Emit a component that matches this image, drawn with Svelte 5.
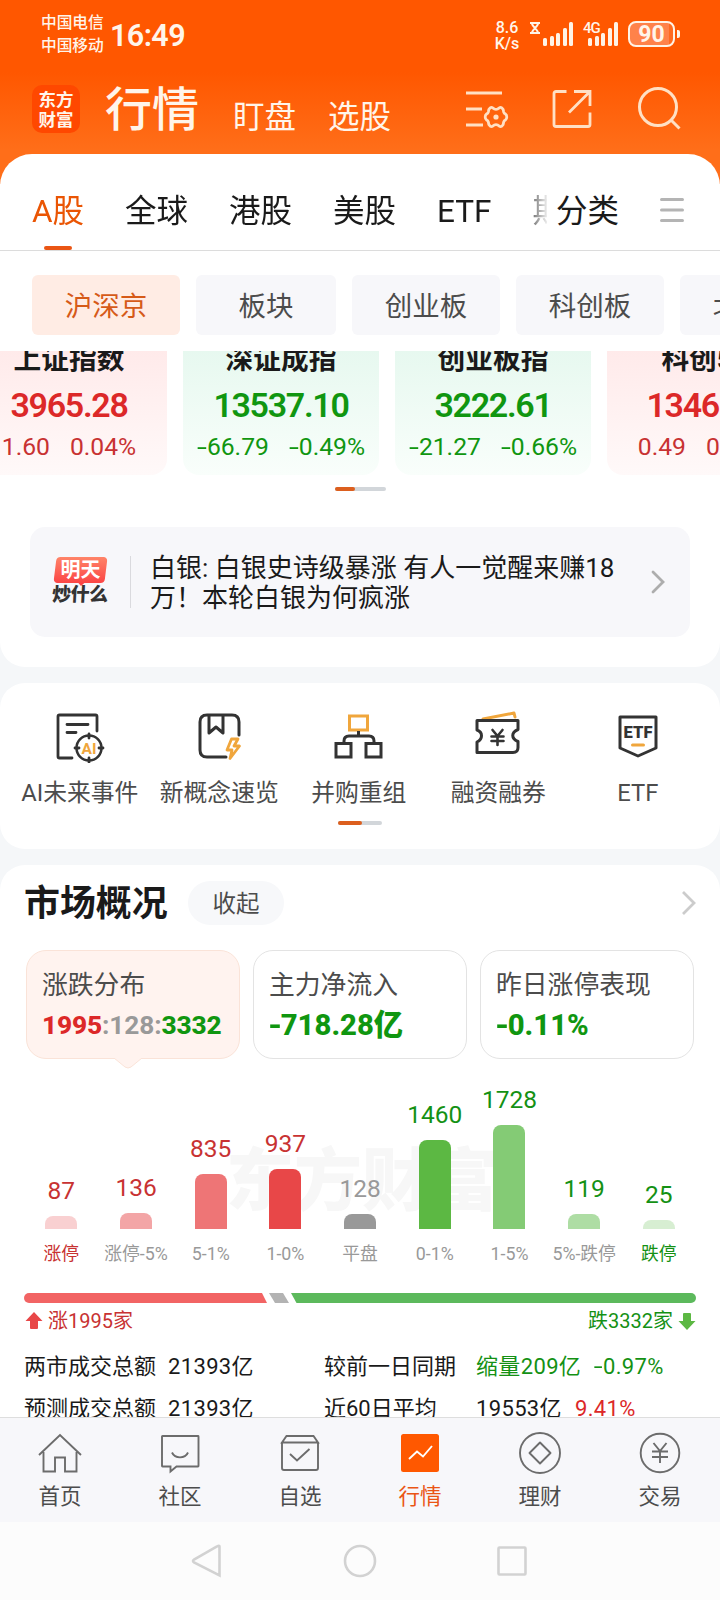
<script>
  const tabs = ['A股', '全球', '港股', '美股', 'ETF', '期货'];
  const chips = [
    { t: '沪深京', w: 148 }, { t: '板块', w: 140 }, { t: '创业板', w: 148 },
    { t: '科创板', w: 148 }, { t: '北交所', w: 148 }
  ];
  const indices = [
    { n: '上证指数', v: '3965.28', c: '1.60', p: '0.04%', up: true },
    { n: '深证成指', v: '13537.10', c: '-66.79', p: '-0.49%', up: false },
    { n: '创业板指', v: '3222.61', c: '-21.27', p: '-0.66%', up: false },
    { n: '科创50', v: '1346.12', c: '0.49', p: '0.04%', up: true }
  ];
  const bars = [
    { v: 87, l: '涨停', h: 13, c: '#f9d0d1', k: 'up hot' },
    { v: 136, l: '涨停-5%', h: 16, c: '#f3a5a6', k: 'up' },
    { v: 835, l: '5-1%', h: 55, c: '#ee7576', k: 'up' },
    { v: 937, l: '1-0%', h: 60, c: '#e84748', k: 'up' },
    { v: 128, l: '平盘', h: 15, c: '#999999', k: 'flat' },
    { v: 1460, l: '0-1%', h: 89, c: '#5cb843', k: 'down' },
    { v: 1728, l: '1-5%', h: 104, c: '#84cb75', k: 'down' },
    { v: 119, l: '5%-跌停', h: 15, c: '#aedda4', k: 'down' },
    { v: 25, l: '跌停', h: 9, c: '#d7eed2', k: 'down hot' }
  ];
  const signal = [8, 10, 13, 18, 24];
</script>

{#snippet signed(s)}{#if s[0] === '-'}<u>-</u>{s.slice(1)}{:else}{s}{/if}{/snippet}

<div class="page">
  <header>
    <div class="status">
      <div class="carriers"><span>中国电信</span><span>中国移动</span></div>
      <div class="time">16:49</div>
      <div class="speed"><span>8.6</span><span>K/s</span></div>
      <svg class="glass" width="10" height="12" viewBox="0 0 10 12"><path d="M0 1h10M0 11h10M2 1.500c0 3 6 6 6 9.500M8 1.500c0 3-6 6-6 9.500" fill="none" stroke="#fff3e6" stroke-width="2" /></svg>
      <div class="bars">{#each signal as h}<i style="height:{h}px"></i>{/each}</div>
      <div class="bars second"><b>4G</b>{#each signal as h}<i style="height:{h}px"></i>{/each}</div>
      <div class="battery"><span>90</span></div><div class="nub"></div>
    </div>
    <div class="nav">
      <div class="logo"><span>东方</span><span>财富</span></div>
      <div class="n1">行情</div><div class="n2">盯盘</div><div class="n2 n3">选股</div>
      <svg class="i1" width="44" height="44" viewBox="0 0 44 44" fill="none" stroke="#ffe0c4" stroke-width="2.800">
        <path d="M1 5h36M1 21h16M1 37h17" />
        <path d="M25.200 19.800q1.300-.9 2.500 0l1.600 1.200q1.700.7 3.400 0l1.600-1.200q1.200-.9 2.500 0l1.300 1.500.6 2.800q.4 1.300 1.700 1.900 1.400.9 1.400 3t-1.400 3q-1.300.6-1.700 1.900l-.6 2.800-1.300 1.500q-1.300.9-2.500 0l-1.600-1.200q-1.700-.7-3.400 0l-1.600 1.200q-1.200.9-2.500 0l-1.300-1.500-.6-2.800q-.4-1.300-1.700-1.900-1.400-.9-1.400-3t1.400-3q1.300-.6 1.700-1.900l.6-2.800z" stroke-linejoin="round" />
        <circle cx="31" cy="29" r="2.600" fill="#ffe0c4" stroke="none" />
      </svg>
      <svg class="i2" width="44" height="44" viewBox="0 0 44 44" fill="none" stroke="#ffe0c4" stroke-width="2.800">
        <path d="M16.500 4.500H6a2 2 0 0 0-2 2v31a2 2 0 0 0 2 2h32a2 2 0 0 0 2-2V25.500M24 4.500h16V19M39.500 5 19 25.500" />
      </svg>
      <svg class="i3" width="46" height="46" viewBox="0 0 46 46" fill="none" stroke="#ffe0c4" stroke-width="3">
        <circle cx="21" cy="21" r="18.500" /><path d="m34.500 34.500 8 8" />
      </svg>
    </div>
  </header>

  <section class="top">
    <div class="tabs">
      <div class="tablist">{#each tabs as t, i}<span class:on={i === 0}>{t}</span>{/each}</div>
      <span class="cat">分类</span>
      <svg width="24" height="26" viewBox="0 0 24 26"><path d="M1.500 2.500h21M1.500 13h21M1.500 23.500h21" stroke="#b4b4b4" stroke-width="3" stroke-linecap="round" /></svg>
    </div>
    <div class="chips">{#each chips as c, i}<div class:on={i === 0} style="width:{c.w}px">{c.t}</div>{/each}</div>
    <div class="indices">
      {#each indices as x}
        <div class="index" class:up={x.up}>
          <h4>{x.n}</h4><strong>{x.v}</strong>
          <p><span>{@render signed(x.c)}</span><span>{@render signed(x.p)}</span></p>
        </div>
      {/each}
    </div>
    <div class="pager"><i></i></div>
    <div class="news">
      <div class="brand">
        <div class="tm"><b>明天</b></div><em>炒什么</em>
      </div>
      <div class="rule"></div>
      <p>白银: 白银史诗级暴涨 有人一觉醒来赚18<br />万！本轮白银为何疯涨</p>
      <svg width="14" height="24" viewBox="0 0 14 24"><path d="m2 2 10 10L2 22" fill="none" stroke="#adadad" stroke-width="2.800" stroke-linecap="round" /></svg>
    </div>
  </section>

  <section class="tools">
    <div class="toolrow">
      <div class="tool">
        <svg width="52" height="52" viewBox="0 0 52 52" fill="none" stroke="#333" stroke-width="2.800" stroke-linecap="round" stroke-linejoin="round">
          <path d="M43 20V5.500Q43 4 41.500 4h-36Q4 4 4 5.500v40Q4 47 5.500 47H18M13 13.500h21M13 21.500h9" />
          <circle cx="35" cy="37" r="12.500" stroke-width="2.500" /><path d="M35 23v4M35 47v4M21 37h4M45 37h4" />
          <text x="35" y="42.500" text-anchor="middle" font-size="15.500" font-weight="700" fill="#f0a63c" stroke="none">AI</text>
        </svg><span>AI未来事件</span>
      </div>
      <div class="tool">
        <svg width="52" height="52" viewBox="0 0 52 52" fill="none" stroke="#333" stroke-width="3" stroke-linecap="round" stroke-linejoin="round">
          <path d="M46 24V11q0-7-7-7H14q-7 0-7 7v28q0 7 7 7h19M16 5v17l7-6 7 6V5" />
          <path d="m38.500 28-4.500 11h5l-2 8.500L46.500 35h-5.500l4-7z" stroke="#f0a63c" stroke-width="2.800" />
        </svg><span>新概念速览</span>
      </div>
      <div class="tool">
        <svg width="52" height="52" viewBox="0 0 52 52" fill="none" stroke="#333" stroke-width="3">
          <path d="M16.500 5h18v14h-18z" stroke="#f0a63c" /><path d="M25.500 20v5M11 32v-2q0-5 5-5h20q5 0 5 5v2M3 32.500h15v13.500H3zM33 32.500h15v13.500H33z" />
        </svg><span>并购重组</span>
      </div>
      <div class="tool">
        <svg width="52" height="52" viewBox="0 0 52 52" fill="none" stroke="#333" stroke-width="3" stroke-linejoin="round" stroke-linecap="round">
          <path d="m11 8 31-6 1 4" stroke="#f0a63c" /><path d="M5 9.500h41v9c-7 3-7 9 0 12v6q0 5-5 5H5V31c6-3 6-10 0-12z" /><path d="m20.500 19 5 6 5-6M25.500 25v9M19.500 25.500h12M19.500 30h12" stroke-width="2.600" />
        </svg><span>融资融券</span>
      </div>
      <div class="tool">
        <svg width="52" height="52" viewBox="0 0 52 52" fill="none" stroke="#333" stroke-width="3" stroke-linejoin="round">
          <path d="M8 6h36v31l-18 8-18-8z" /><path d="M20.500 34h11" stroke="#f0a63c" stroke-linecap="round" />
          <text x="26" y="27" text-anchor="middle" font-size="16.500" font-weight="900" fill="#333" stroke="none" textLength="29">ETF</text>
        </svg><span>ETF</span>
      </div>
    </div>
    <div class="pager small"><i></i></div>
  </section>

  <section class="market">
    <div class="head">
      <h2>市场概况</h2><button>收起</button>
      <svg width="15" height="26" viewBox="0 0 15 26"><path d="m2 2 11 11L2 24" fill="none" stroke="#ccc" stroke-width="2.800" /></svg>
    </div>
    <div class="cards">
      <div class="card sel"><span>涨跌分布</span><strong><b>1995</b><i>:128:</i>3332</strong>
        <svg width="28" height="11" viewBox="0 0 28 11"><path d="M0 0 11 9q3 2 6 0L28 0" fill="#fff3ef" stroke="#fae3d8" /></svg></div>
      <div class="card"><span>主力净流入</span><strong>{@render signed('-718.28亿')}</strong></div>
      <div class="card"><span>昨日涨停表现</span><strong>{@render signed('-0.11%')}</strong></div>
    </div>
    <div class="chart">
      <div class="mark">东方财富</div>
      {#each bars as b}
        <div class="col {b.k}"><span>{b.v}</span><i style="height:{b.h}px;background:{b.c}"></i><small>{b.l}</small></div>
      {/each}
    </div>
    <svg class="split" width="672" height="10" viewBox="0 0 672 10">
      <path d="M5 0h233l5 10H5A5 5 0 0 1 5 0z" fill="#f26464" /><path d="M245 0h14l6 10h-14z" fill="#b3b3b3" /><path d="M267 0h400a5 5 0 0 1 0 10H272.500z" fill="#5cb95c" />
    </svg>
    <div class="counts">
      <div class="upc"><svg width="18" height="18" viewBox="0 0 18 18"><path d="M9 0 17.500 9H13v7q0 1-1 1H6q-1 0-1-1V9H.5z" fill="#e84748" /></svg>涨1995家</div>
      <div class="dnc">跌3332家<svg width="18" height="18" viewBox="0 0 18 18"><path d="M9 18 .5 9H5V2q0-1 1-1h6q1 0 1 1v7h4.500z" fill="#5cb843" /></svg></div>
    </div>
    <div class="stats">
      <span>两市成交总额</span><span>21393亿</span><span>较前一日同期</span><span class="g">缩量209亿<em>{@render signed('-0.97%')}</em></span>
      <span>预测成交总额</span><span>21393亿</span><span>近60日平均</span><span>19553亿<em class="r">9.41%</em></span>
    </div>
  </section>

  <nav>
    <div><svg width="46" height="42" viewBox="0 0 46 42"><path d="M2 23 23 3l21 20M6.500 20v19.500H18V25.500h10v14h11.500V20" /></svg>首页</div>
    <div><svg width="46" height="42" viewBox="0 0 46 42"><path d="M5.500 4h35.500q.5 0 .5.500v29.500q0 .5-.5.500H19.500l-6 5v-5h-8q-.5 0-.5-.5V4.500q0-.5.500-.5zM15 20.500c3 6.500 13 6.500 16 0" /></svg>社区</div>
    <div><svg width="46" height="42" viewBox="0 0 46 42"><path d="M5 10.500 9.500 4h27l4.500 6.500zM5 10v26q0 2 2 2h32q2 0 2-2V10M13 22l7 6.500L32.500 17" /></svg>自选</div>
    <div class="on"><svg width="46" height="42" viewBox="0 0 46 42"><rect x="4" y="2" width="38" height="38" rx="2.500" fill="#ff5800" stroke="none" /><path d="m12 27 8-7.500 6 5L35 14" stroke="#fff" /></svg>行情</div>
    <div><svg width="46" height="42" viewBox="0 0 46 42"><circle cx="23" cy="21" r="20" /><path d="m23 10.500 10.500 10.500L23 31.500 12.500 21z" stroke-linejoin="round" /></svg>理财</div>
    <div><svg width="46" height="42" viewBox="0 0 46 42"><circle cx="23" cy="21" r="19.300" /><path d="m16.500 11 6.500 8 6.500-8M23 19v12M15 19.500h16M15 25h16" /></svg>交易</div>
  </nav>
  <footer>
    <svg width="34" height="34" viewBox="0 0 34 34"><path d="M28.500 2.500v29L3 18.500q-2-1.500 0-3L26 2.500q2.500-1.500 2.500 0z" /></svg>
    <svg width="34" height="34" viewBox="0 0 34 34"><circle cx="17" cy="17" r="15" /></svg>
    <svg width="34" height="34" viewBox="0 0 34 34"><rect x="3.500" y="3.500" width="27" height="27" rx="1" /></svg>
  </footer>
</div>

<style>
  :global(body) { margin: 0; }
  .page { width: 720px; height: 1600px; overflow: hidden; display: flex; flex-direction: column; background: #f5f7f9; font-family: Roboto, "Noto Sans CJK SC", sans-serif; color: #1a1a1a; }
  .page, .page * { box-sizing: border-box; }
  svg { display: block; flex: none; }
  i, em { font-style: normal; }
  u { display: inline-block; text-decoration: none; width: .4em; text-align: center; transform: scaleX(1.45); }
  h2, h4, p { margin: 0; }

  header { height: 184px; flex: none; background: linear-gradient(#ff5700 0 72px, #ff6e19 150px); color: #fff5ea; }
  .status { height: 70px; display: flex; align-items: flex-start; padding-left: 41px; }
  .carriers { display: flex; flex-direction: column; font-size: 15.700px; line-height: 23px; padding-top: 11px; width: 69px; font-weight: 500; white-space: nowrap; }
  .time { font-size: 30.500px; line-height: 36px; padding-top: 18px; width: 384px; font-weight: 600; letter-spacing: -.6px; }
  .speed { display: flex; flex-direction: column; font-size: 16px; line-height: 15.500px; padding-top: 20px; width: 26px; margin-right: 10px; text-align: center; font-weight: 500; }
  .glass { margin-top: 22px; }
  .bars { display: flex; align-items: flex-end; gap: 2.500px; height: 24px; margin: 22px 0 0 3px; position: relative; }
  .bars i { width: 4px; background: #fff3e6; border-radius: 1.500px; }
  .bars.second { margin-left: 15px; }
  .bars b { position: absolute; left: -5px; top: -1px; font-size: 15px; line-height: 15px; font-weight: 500; letter-spacing: -1px; }
  .battery { width: 47px; height: 26px; margin: 21px 2px 0 10px; border: 2px solid #fff3e6; border-radius: 8px; background: linear-gradient(90deg, #ff824a 0 39px, #ff6a20 39px); font-size: 23px; line-height: 23px; font-weight: 700; text-align: center; }
  .nub { width: 3px; height: 8px; margin-top: 30px; background: #fff3e6; border-radius: 0 2px 2px 0; }
  .nav { display: flex; align-items: flex-start; padding-left: 32px; height: 84px; }
  .logo { width: 48px; height: 48px; margin-top: 15px; border-radius: 10px; background: #ff4800; display: flex; flex-direction: column; align-items: center; padding-top: 4px; font-family: "Noto Sans CJK SC", sans-serif; font-size: 17.500px; line-height: 20px; font-weight: 700; }
  .n1 { font-size: 47px; line-height: 60px; padding-top: 10px; margin-left: 25px; width: 128px; white-space: nowrap; font-weight: 500; }
  .n2 { font-size: 31.500px; line-height: 40px; padding-top: 28px; width: 95px; white-space: nowrap; }
  .n3 { width: 137px; }
  .i1 { margin-top: 18px; width: 44px; } .i2 { margin: 17px 0 0 41px; } .i3 { margin: 16px 0 0 43px; }

  section { background: #fff; flex: none; border-radius: 25px; overflow: hidden; }
  .top { margin-top: -30px; height: 513px; border-radius: 32px 32px 25px 25px; }
  .tabs { height: 97px; border-bottom: 1px solid #dcdcdc; display: flex; align-items: flex-start; padding-left: 32px; font-size: 31.500px; line-height: 40px; }
  .tablist { display: flex; gap: 41px; width: 515px; height: 97px; padding-top: 38px; overflow: hidden; white-space: nowrap; -webkit-mask: linear-gradient(90deg, #000 490px, transparent 517px); mask: linear-gradient(90deg, #000 490px, transparent 517px); }
  .tablist span { flex: none; }
  .tablist .on { color: #ea5504; display: flex; flex-direction: column; align-items: center; }
  .tablist .on::after { content: ""; width: 28px; height: 4px; border-radius: 2px; background: #ea5514; margin-top: 14px; }
  .cat { padding: 38px 40.500px 0 9px; }
  .tabs svg { margin-top: 43px; }
  .chips { display: flex; gap: 16px; padding: 24px 0 16px 32px; height: 100px; }
  .chips div { flex: none; height: 60px; border-radius: 6px; background: #f7f7fa; color: #4c4c4c; text-align: center; font-size: 27.500px; line-height: 64px; }
  .chips .on { background: #ffece4; color: #d65a18; }
  .indices { display: flex; gap: 16px; margin-left: -29px; height: 124px; overflow: hidden; align-items: flex-end; }
  .index { flex: none; width: 196px; height: 150px; border-radius: 16px; background: linear-gradient(#e3f7ed, #f9fefb); text-align: center; color: #109610; }
  .index.up { background: linear-gradient(#ffe7e7, #fff9f9); color: #dc2828; }
  .index h4 { font-size: 27.700px; line-height: 36px; padding-top: 17px; color: #1a1a1a; font-weight: 700; }
  .index strong { display: block; font-size: 34px; line-height: 44px; padding-top: 5px; font-weight: 600; letter-spacing: -1.300px; }
  .index p { display: flex; justify-content: center; gap: 20px; font-size: 24.700px; line-height: 30px; padding-top: 5px; }
  .index.up p { color: #c83232; }
  .pager { width: 51px; height: 4px; border-radius: 2px; background: #d2d6da; margin: 12px auto 0; }
  .pager i { display: block; width: 20px; height: 4px; border-radius: 2px; background: #dc5f1e; }
  .news { display: flex; align-items: center; margin: 36px 30px 0; height: 110px; background: #f7f7fa; border-radius: 15px; padding: 0 25px 0 22px; }
  .brand { width: 56px; display: flex; flex-direction: column; align-items: center; }
  .tm { width: 51px; height: 26px; border-radius: 4px; background: linear-gradient(#ff8468, #fb4545); transform: skewX(-7deg); color: #fff; font-size: 20px; line-height: 26px; text-align: center; position: relative; }
  .tm::after { content: ""; position: absolute; left: 25px; top: 26px; border: 3px solid transparent; border-top-color: #fb4545; border-bottom: 0; }
  .tm b { font-weight: 700; display: block; transform: skewX(7deg); }
  .brand em { font-size: 19px; line-height: 24px; font-weight: 900; white-space: nowrap; transform: skewX(-3deg); color: #333; letter-spacing: -.5px; }
  .rule { width: 1px; height: 52px; background: #dadade; margin: 0 20px 0 22px; }
  .news p { flex: 1; font-size: 26px; line-height: 30px; white-space: nowrap; padding-top: 1px; margin-left: -1px; }

  .tools { margin-top: 16px; height: 166px; }
  .toolrow { display: flex; padding: 28px 0 0 10px; width: 710px; height: 135px; }
  .tool { width: 139.500px; display: flex; flex-direction: column; align-items: center; font-size: 23.800px; line-height: 32px; color: #4c4c4c; white-space: nowrap; flex: none; }
  .tool span { margin-top: 14px; }
  .pager.small { width: 44px; margin-top: 3px; } .small i { width: 24px; }

  .market { margin-top: 16px; height: 552px; border-radius: 25px 25px 0 0; }
  .head { display: flex; align-items: center; padding: 0 24px; margin-top: 14px; height: 48px; }
  h2 { font-size: 35.900px; line-height: 48px; font-weight: 700; width: 164px; white-space: nowrap; padding-top: 2px; }
  button { width: 96px; height: 44px; border: 0; padding: 0; border-radius: 22px; background: #f7f8fa; color: #4c4c4c; font: 23.500px/46px Roboto, "Noto Sans CJK SC", sans-serif; margin-right: auto; }
  .cards { display: flex; gap: 13px; padding: 23px 26px 0; height: 132px; }
  .card { width: 214px; height: 109px; border: 1px solid #e3e3e3; border-radius: 20px; padding: 17px 0 0 15px; display: flex; flex-direction: column; white-space: nowrap; position: relative; }
  .card span { font-size: 25.800px; line-height: 34px; color: #4c4c4c; }
  .card strong { font-size: 29.300px; line-height: 40px; padding-top: 3px; color: #109610; font-weight: 800; }
  .card strong :global(u) { transform: scaleX(1.15); }
  .card.sel { background: #fff3ef; border-color: #fae3d8; }
  .sel strong { font-size: 26.300px; letter-spacing: -.15px; }
  .sel b { color: #dc2828; font-weight: 800; } .sel strong i { color: #999; font-weight: 700; }
  .sel svg { position: absolute; left: 87px; top: 107px; }
  .chart { position: relative; display: flex; height: 207px; padding-left: 24px; align-items: flex-end; }
  .mark { position: absolute; left: 226px; top: 77px; font: 900 68px/80px "Noto Sans CJK SC", sans-serif; color: #f7f7f7; white-space: nowrap; }
  .col { width: 74.700px; display: flex; flex-direction: column; align-items: center; position: relative; white-space: nowrap; flex: none; }
  .col span { font-size: 24.500px; line-height: 30px; margin-bottom: 10px; }
  .col i { width: 32px; border-radius: 8px 8px 0 0; }
  .col small { font-size: 17.800px; line-height: 24px; margin: 13px 0 0; color: #999; }
  .up span, .up.hot small { color: #c83232; } .down span, .down.hot small { color: #149114; } .flat span { color: #999; }
  .split { margin: 27px 0 0 24px; }
  .counts { display: flex; justify-content: space-between; padding: 6px 24px 0 25px; font-size: 20px; line-height: 24px; }
  .counts div { display: flex; align-items: center; gap: 5px; }
  .upc { color: #c83232; } .dnc { color: #149114; }
  .stats { display: grid; grid-template-columns: 144px 156px 152px 1fr; grid-auto-rows: 42px; padding: 13px 0 0 24px; font-size: 22px; line-height: 41px; white-space: nowrap; }
  .stats span:nth-child(even) { letter-spacing: .35px; }
  .stats em { margin-left: 13px; } .g { color: #149114; } .r { color: #dc2828; }

  nav { position: relative; height: 105px; flex: none; border-top: 1px solid #dedede; background: #f7f7fa; display: flex; }
  nav div { width: 120px; display: flex; flex-direction: column; align-items: center; gap: 8px; padding-top: 14px; font-size: 21.500px; line-height: 30px; color: #4c4c4c; }
  nav svg { fill: none; stroke: #6c6c6c; stroke-width: 1.900; }
  nav .on { color: #ea5514; }
  footer { height: 78px; flex: none; background: #fcfcfc; display: flex; justify-content: center; gap: 118px; align-items: center; }
  footer svg { fill: none; stroke: #d2d2d2; stroke-width: 2.600; }
</style>
